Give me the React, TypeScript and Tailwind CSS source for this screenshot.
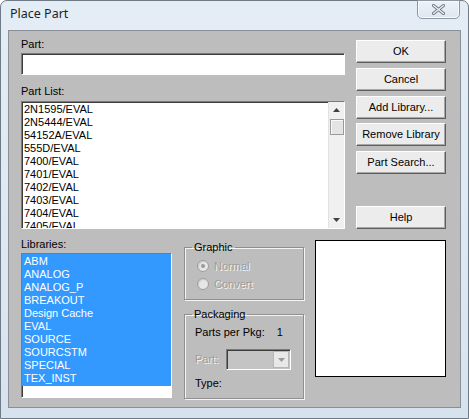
import React from "react";

const font = { fontFamily: '"Liberation Sans", Arial, sans-serif' };

function Btn({ label }: { label: string }) {
  return (
    <div className="h-[23px] w-[90px] bg-[#ececec] border border-t-white border-l-white border-r-[#5e5e5e] border-b-[#5e5e5e] shadow-[inset_-1px_-1px_0_#a8a8a8] flex items-center justify-center text-[11px] text-black leading-none">
      {label}
    </div>
  );
}

const parts = [
  "2N1595/EVAL",
  "2N5444/EVAL",
  "54152A/EVAL",
  "555D/EVAL",
  "7400/EVAL",
  "7401/EVAL",
  "7402/EVAL",
  "7403/EVAL",
  "7404/EVAL",
  "7405/EVAL",
];

const libs = [
  "ABM",
  "ANALOG",
  "ANALOG_P",
  "BREAKOUT",
  "Design Cache",
  "EVAL",
  "SOURCE",
  "SOURCSTM",
  "SPECIAL",
  "TEX_INST",
];

const sunken =
  "border border-t-[#7a7a7a] border-l-[#7a7a7a] border-r-white border-b-white shadow-[inset_1px_1px_0_#3c3c3c]";

const disabledText = "text-[#9c9c9c] [text-shadow:1px_1px_0_#f4f4f4]";

function Radio({ checked, label }: { checked?: boolean; label: string }) {
  return (
    <div className="flex items-center gap-[5px] h-[18px]">
      <div className="w-[12px] h-[12px] rounded-full bg-[#e6e6e6] border border-[#9c9c9c] shadow-[inset_1px_1px_1px_#cfcfcf] flex items-center justify-center">
        {checked && <div className="w-[4px] h-[4px] rounded-full bg-[#9a9a9a]" />}
      </div>
      <span className={`text-[11px] leading-none ${disabledText}`}>{label}</span>
    </div>
  );
}

export default function App() {
  return (
    <div className="w-[469px] h-[419px] bg-white overflow-hidden" style={font}>
      <div className="w-[469px] h-[419px] rounded-t-[7px] border border-[#6e7a86] bg-gradient-to-b from-[#e4edf5] via-[#dfe9f3] to-[#d6e3ef] flex flex-col relative">
        {/* title bar */}
        <div className="h-[29px] flex items-start justify-between pl-[9px] pr-[8px]">
          <span
            className="mt-[7px] text-[12.5px] text-[#1e1e1e] leading-none"
            style={{ fontFamily: '"Noto Sans", "Open Sans", sans-serif' }}
          >
            Place Part
          </span>
          <div className="w-[43px] h-[19px] -mt-px rounded-b-[5px] border border-[#8e98a3] bg-gradient-to-b from-[#eef3f8] to-[#dde6ef] shadow-[inset_0_0_0_1px_#f7fafc] flex items-center justify-center">
            <svg width="13" height="11" viewBox="0 0 13 11">
              <path
                d="M1.5 1.5 L11.5 9.5 M11.5 1.5 L1.5 9.5"
                stroke="#6f7780"
                strokeWidth="3"
                strokeLinecap="round"
              />
              <path
                d="M1.5 1.5 L11.5 9.5 M11.5 1.5 L1.5 9.5"
                stroke="#f2f5f8"
                strokeWidth="1.2"
                strokeLinecap="round"
              />
            </svg>
          </div>
        </div>

        {/* client area */}
        <div className="mx-[7px] mb-[10px] flex-1 bg-[#bdbdbd] border border-[#8a8f95] flex flex-col text-black">
          {/* top row */}
          <div className="flex pl-[12px]">
            <div className="w-[324px] flex flex-col pt-[7px]">
              <span className="text-[11px] leading-[13px] h-[13px]">Part:</span>
              <div className={`mt-[2px] h-[22px] bg-white ${sunken}`} />
              <span className="mt-[10px] text-[11px] leading-[13px] h-[13px]">Part List:</span>
              <div className={`mt-[3px] h-[128px] bg-white ${sunken} flex overflow-hidden`}>
                <div className="flex-1 pl-[2px] pt-px overflow-hidden">
                  {parts.map((p) => (
                    <div key={p} className="text-[11px] leading-[13px] h-[13px] whitespace-nowrap">
                      {p}
                    </div>
                  ))}
                </div>
                <div className="w-[16px] bg-[#f0f0f0] border-l border-[#e2e2e2] flex flex-col items-center">
                  <div className="h-[16px] flex items-center justify-center">
                    <svg width="7" height="4" viewBox="0 0 7 4">
                      <path d="M0 4 L3.5 0 L7 4 Z" fill="#404040" />
                    </svg>
                  </div>
                  <div className="mt-[1px] w-[14px] h-[16px] bg-[#e4e4e4] border border-[#9a9a9a] shadow-[inset_1px_1px_0_#fafafa]" />
                  <div className="flex-1" />
                  <div className="h-[16px] flex items-center justify-center">
                    <svg width="7" height="4" viewBox="0 0 7 4">
                      <path d="M0 0 L3.5 4 L7 0 Z" fill="#404040" />
                    </svg>
                  </div>
                </div>
              </div>
            </div>
            <div className="ml-[11px] pt-[9px] flex flex-col">
              <Btn label="OK" />
              <div className="mt-[5px]"><Btn label="Cancel" /></div>
              <div className="mt-[5px]"><Btn label="Add Library..." /></div>
              <div className="mt-[4px]"><Btn label="Remove Library" /></div>
              <div className="mt-[5px]"><Btn label="Part Search..." /></div>
              <div className="mt-[32px]"><Btn label="Help" /></div>
            </div>
          </div>

          {/* bottom row */}
          <div className="flex pl-[12px]">
            <div className="w-[151px] flex flex-col pt-[9px]">
              <span className="text-[11px] leading-[13px] h-[13px]">Libraries:</span>
              <div className={`mt-[2px] h-[145px] bg-white ${sunken} overflow-hidden`}>
                <div className="bg-[#3399ff] pl-[2px] pt-px pb-px">
                  {libs.map((l) => (
                    <div key={l} className="text-[11px] leading-[13px] h-[13px] text-white whitespace-nowrap">
                      {l}
                    </div>
                  ))}
                </div>
              </div>
            </div>

            <div className="ml-[12px] w-[120px] flex flex-col pt-[12px]">
              <fieldset className="h-[59px] border border-[#8f8f8f] shadow-[inset_1px_1px_0_#f4f4f4,1px_1px_0_#f4f4f4] pl-[12px]">
                <legend className="ml-[-5px] px-[2px] text-[11px] leading-[13px]">Graphic</legend>
                <div className="mt-[3px] flex flex-col">
                  <Radio checked label="Normal" />
                  <Radio label="Convert" />
                </div>
              </fieldset>
              <fieldset className="mt-[8px] h-[91px] border border-[#8f8f8f] shadow-[inset_1px_1px_0_#f4f4f4,1px_1px_0_#f4f4f4] pl-[10px]">
                <legend className="ml-[-3px] px-[2px] text-[11px] leading-[13px]">Packaging</legend>
                <div className="mt-[5px] flex text-[11px] leading-[13px]">
                  <span>Parts per Pkg:</span>
                  <span className="ml-[12px]">1</span>
                </div>
                <div className="mt-[10px] flex items-center">
                  <span className={`text-[11px] leading-none w-[31px] ${disabledText}`}>Part:</span>
                  <div className={`w-[65px] h-[21px] bg-[#c4c4c4] ${sunken} flex justify-end items-start p-px`}>
                    <div className="w-[16px] h-[17px] bg-[#e8e8e8] border border-[#b5b5b5] flex items-center justify-center">
                      <svg width="7" height="4" viewBox="0 0 7 4">
                        <path d="M0 0 L3.5 4 L7 0 Z" fill="#9a9a9a" />
                      </svg>
                    </div>
                  </div>
                </div>
                <div className="mt-[7px] text-[11px] leading-[13px]">Type:</div>
              </fieldset>
            </div>

            <div className="ml-[11px] pt-[11px]">
              <div className="w-[131px] h-[137px] bg-white border border-black" />
            </div>
          </div>
        </div>
      </div>
    </div>
  );
}
